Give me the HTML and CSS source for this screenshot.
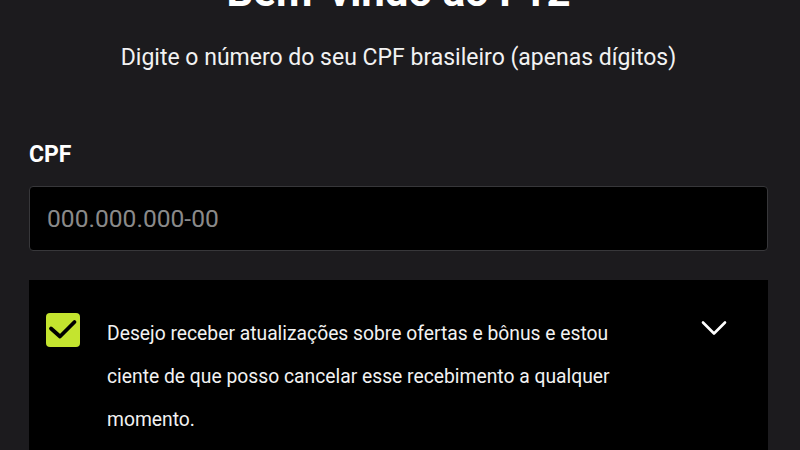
FILE: index.html
```html
<!DOCTYPE html>
<html lang="pt-BR">
<head>
<meta charset="utf-8">
<title>Bem-vindo ao F12</title>
<link rel="stylesheet" href="styles.css">
</head>
<body>
<main class="page">
  <h1 class="title">Bem-vindo ao F12</h1>
  <p class="subtitle">Digite o número do seu CPF brasileiro (apenas dígitos)</p>
  <label class="label" for="cpf">CPF</label>
  <input class="input" id="cpf" type="text" placeholder="000.000.000-00">
  <section class="consent">
    <span class="checkbox">
      <svg width="34" height="34" viewBox="0 0 34 34"><path d="M5 15.5 L14 23.5 L28.5 9" fill="none" stroke="#000" stroke-width="3.8" stroke-linecap="round" stroke-linejoin="round"/></svg>
    </span>
    <p class="consent-text">Desejo receber atualizações sobre ofertas e bônus e estou ciente de que posso cancelar esse recebimento a qualquer momento.</p>
    <span class="chevron">
      <svg width="26" height="16" viewBox="0 0 26 16"><path d="M2 2.5 L13 13.5 L24 2.5" fill="none" stroke="#fff" stroke-width="2.6" stroke-linecap="round" stroke-linejoin="round"/></svg>
    </span>
  </section>
</main>
</body>
</html>
```
FILE: styles.css
```css
* { box-sizing: border-box; }
html, body {
  margin: 0;
  padding: 0;
  background: #1c1b1e;
  overflow: hidden;
  height: 450px;
}
body {
  font-family: Roboto, "Liberation Sans", sans-serif;
  color: #fff;
}
.page {
  width: 739px;
  margin-left: 29px;
  display: flex;
  flex-direction: column;
}
.title {
  margin: -33px 0 0 0;
  font-size: 42px;
  line-height: 50px;
  font-weight: 700;
  text-align: center;
}
.subtitle {
  margin: 27px 0 0 0;
  font-size: 23px;
  line-height: 28px;
  text-align: center;
  color: #f2f2f2;
}
.label {
  margin-top: 69px;
  font-size: 23px;
  line-height: 28px;
  font-weight: 700;
}
.input {
  margin-top: 17px;
  height: 65px;
  width: 100%;
  background: #000;
  border: 1px solid #37373a;
  border-radius: 4px;
  padding: 0 17px;
  font-family: Roboto, "Liberation Sans", sans-serif;
  font-size: 24.6px;
  color: #fff;
  outline: none;
}
.input::placeholder { color: #8a8a8a; }
.consent {
  margin-top: 29px;
  background: #000;
  display: flex;
  align-items: flex-start;
  padding: 32px 41px 0 17px;
  height: 170px;
}
.checkbox {
  flex: none;
  width: 34px;
  height: 34px;
  margin-top: 1px;
  border-radius: 4px;
  background: #c4e42f;
  display: flex;
}
.consent-text {
  margin: 0 0 0 27px;
  flex: 1;
  font-size: 19.3px;
  line-height: 43px;
  color: #f2f2f2;
  max-width: 540px;
}
.chevron {
  flex: none;
  margin-left: auto;
  margin-top: 8px;
  display: flex;
}
```
